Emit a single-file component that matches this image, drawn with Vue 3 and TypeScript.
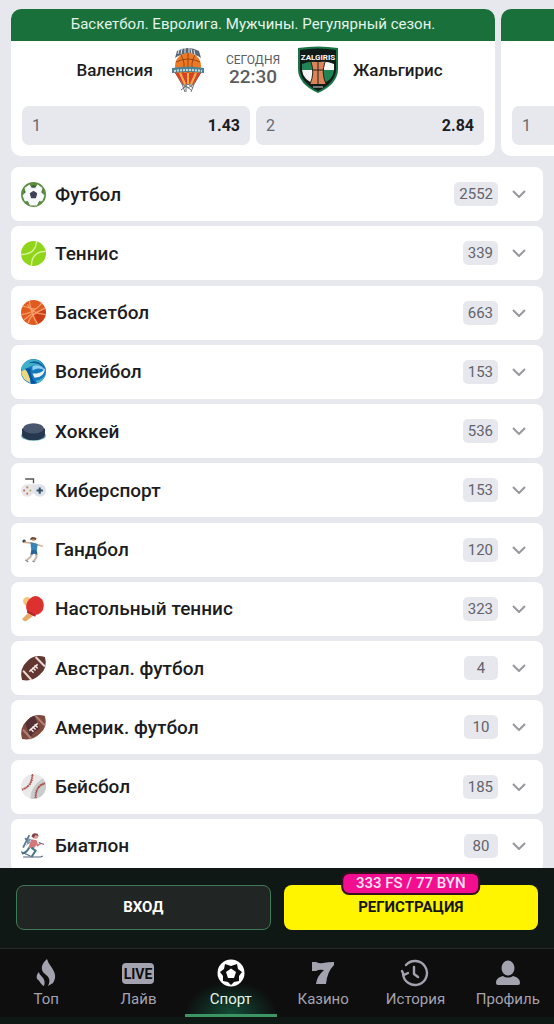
<script setup lang="ts">
interface Sport {
  id: string
  name: string
  count: number
}

const sports: Sport[] = [
  { id: 'football', name: 'Футбол', count: 2552 },
  { id: 'tennis', name: 'Теннис', count: 339 },
  { id: 'basketball', name: 'Баскетбол', count: 663 },
  { id: 'volleyball', name: 'Волейбол', count: 153 },
  { id: 'hockey', name: 'Хоккей', count: 536 },
  { id: 'esports', name: 'Киберспорт', count: 153 },
  { id: 'handball', name: 'Гандбол', count: 120 },
  { id: 'table-tennis', name: 'Настольный теннис', count: 323 },
  { id: 'aussie', name: 'Австрал. футбол', count: 4 },
  { id: 'american', name: 'Америк. футбол', count: 10 },
  { id: 'baseball', name: 'Бейсбол', count: 185 },
  { id: 'biathlon', name: 'Биатлон', count: 80 },
]

const tabs = [
  { id: 'top', label: 'Топ' },
  { id: 'live', label: 'Лайв' },
  { id: 'sport', label: 'Спорт' },
  { id: 'casino', label: 'Казино' },
  { id: 'history', label: 'История' },
  { id: 'profile', label: 'Профиль' },
]
const activeTab = 'sport'
</script>

<template>
  <div class="page">
    <section class="carousel">
      <article class="match">
        <h2 class="league">Баскетбол. Евролига. Мужчины. Регулярный сезон.</h2>
        <div class="teams">
          <div class="team home">
            <span>Валенсия</span>
            <svg class="crest" viewBox="0 0 44 48" aria-hidden="true">
              <path d="M9 12 11 5Q22-1 33 5l2 7Q22 3 9 12Z" fill="#596673" />
              <path d="m12 8 1-4m2 4 1-5m3 4V2m4 5V2m3 6-1-5m4 6-1-5" stroke="#dfe6eb" stroke-width="1" />
              <path d="M8 25 17 38h10l9-13Z" fill="#d8422b" />
              <path d="m13 26 6 12m3-12v12m9-12-6 12" stroke="#f6c34a" stroke-width="3" />
              <path d="m9 26 7 12h12l7-12" fill="none" stroke="#7b4436" stroke-width="1" />
              <circle cx="22" cy="20" r="13" fill="#ee7925" />
              <path d="M22 7v26M10 16q12-6 24 0M15 9q5 8 2 18M29 9q-5 8-2 18" fill="none" stroke="#934719" stroke-width="1" />
              <path d="M9 27h26l-8 11H17Z" fill="#d8422b" />
              <path d="m14 27 5 11m3-11v11m8-11-5 11" stroke="#f6b244" stroke-width="2" />
              <path d="M6 22q16-3 32 0v5q-16-2-32 0Z" fill="#4d8390" />
              <path d="M8 25q14-2 28 0" fill="none" stroke="#c9dce0" stroke-width="2" stroke-dasharray="2 1" />
              <path d="m16 38 3 8m-2-4 5-4 5 4m-11-4 6 4 6-4-3 8m-5-8v8m-5-2 5-4 5 4" fill="none" stroke="#6c7378" stroke-width="1" />
            </svg>
          </div>
          <div class="kickoff">
            <span class="day">СЕГОДНЯ</span>
            <time class="hour">22:30</time>
          </div>
          <div class="team">
            <svg class="crest" viewBox="0 0 44 48" aria-hidden="true">
              <path d="M2 2Q22-1 42 2v21q0 15-20 24Q2 38 2 23Z" fill="#197345" />
              <path d="M4 4Q22 1 40 4v19q0 13-18 22Q4 36 4 23Z" fill="#111b18" />
              <path d="M6 18q8-3 14-2v9H6Z" fill="#208454" />
              <path d="M24 16q7-1 14 2v6H24Z" fill="#f7f8f6" />
              <path d="M6 24h13v14Q7 34 6 24Z" fill="#f7f8f6" />
              <path d="M25 24h13q-1 11-13 14Z" fill="#208454" />
              <path d="M15 16h14q-4 11 1 22H14q5-11 1-22Z" fill="#db8457" />
              <path d="M22 16v22M17 24h10M15 16q4 11-1 22m15-22q-4 11 1 22" fill="none" stroke="#26211e" stroke-width="1" />
              <path d="M17 41h10" stroke="#d8d8d8" stroke-width="1" />
              <text x="22" y="14" class="crest-name">ZALGIRIS</text>
            </svg>
            <span>Жальгирис</span>
          </div>
        </div>
        <div class="odds">
          <button type="button" class="odd"><span>1</span><b>1.43</b></button>
          <button type="button" class="odd"><span>2</span><b>2.84</b></button>
        </div>
      </article>
      <article class="match">
        <div class="league"></div>
        <div class="teams"></div>
        <div class="odds">
          <button type="button" class="odd"><span>1</span></button>
        </div>
      </article>
    </section>

    <main class="sports">
      <button v-for="sport in sports" :key="sport.id" type="button" class="sport">
        <svg class="sport-icon" viewBox="0 0 24 24" aria-hidden="true">
          <g v-if="sport.id === 'football'">
            <circle cx="12" cy="12" r="12" fill="#5c8c3f" />
            <circle cx="12" cy="12" r="9" fill="#3f5e3c" />
            <path d="m8 3 2 3h4l2-3 4 3-1 4 3 3-2 5h-3l-2 4h-6l-2-4H4l-2-5 3-3-1-4Z" fill="#f7f8fb" stroke="#f7f8fb" stroke-linejoin="round" />
            <path d="m12 9 3 2-1 4h-4l-1-4Z" fill="#3d4058" stroke="#3d4058" stroke-linejoin="round" />
          </g>
          <g v-else-if="sport.id === 'tennis'">
            <circle cx="12" cy="12" r="12" fill="#91d51b" />
            <path d="M0 13Q14 13 15 0M10 24q0-14 14-14" fill="none" stroke="#d9f4a0" stroke-width="1.3" />
          </g>
          <g v-else-if="sport.id === 'basketball'">
            <circle cx="12" cy="12" r="12" fill="#e15a20" />
            <path d="M12 12 23 8a12 12 0 0 1-7 15Z" fill="#cd3f16" />
            <path d="M8 1q2 14 8 22M0 14Q12 13 20 3M6 4q4 9 18 10M2 6l12 3m-7 13q1-8 16-14M3 19l9-7" fill="none" stroke="#f6a06b" stroke-width="1.2" />
          </g>
          <g v-else-if="sport.id === 'volleyball'">
            <circle cx="12" cy="12" r="12" fill="#1678bd" />
            <path d="M3 4Q11-3 19 3l3 4Q11 3 2 12q-4-3 1-8Z" fill="#3fb0c8" />
            <path d="M7 4q7-4 13 1l2 3Q16 3 7 4Z" fill="#0f5f9f" />
            <path d="M11 7q8-3 12 4-6-4-12 0Z" fill="#8fd0ee" />
            <path d="M4 10q5 3 5 13-8-3-9-11Z" fill="#e9d983" />
            <path d="M4 9h5q0 10 6 14l-5 1Q8 15 4 9Z" fill="#0755a0" />
            <path d="M23 9q0 8-10 9l-2-4q9 0 12-5Z" fill="#e9f2f1" />
            <path d="M14 21q8-1 10-8-1 8-8 10Z" fill="#4eb7cd" />
          </g>
          <g v-else-if="sport.id === 'hockey'">
            <ellipse cx="12" cy="16" rx="12" ry="5" fill="#78b3bd" />
            <path d="M1 9v6c0 7 22 7 22 0V9Z" fill="#25384d" />
            <ellipse cx="12" cy="9" rx="10" ry="5" fill="#48566e" />
          </g>
          <g v-else-if="sport.id === 'esports'">
            <path d="M4 1h8v4" fill="none" stroke="#575457" stroke-width="1.3" />
            <path d="M7 6h10v9H7Z" fill="#e4e5e9" />
            <circle cx="6" cy="12" r="6" fill="#e8e6e6" />
            <circle cx="18" cy="12" r="6" fill="#dde3e8" />
            <path d="M18 9v6m-3-3h6" stroke="#31526a" stroke-width="2" />
            <circle cx="6" cy="9" r="1" fill="#b98a63" /><circle cx="3" cy="12" r="1" fill="#ba615b" />
            <circle cx="9" cy="12" r="1" fill="#a4b35a" /><circle cx="6" cy="15" r="1" fill="#d27467" />
          </g>
          <g v-else-if="sport.id === 'handball'">
            <circle cx="3" cy="4" r="1.6" fill="#394351" />
            <path d="m3 5 8 1 10 3" fill="none" stroke="#d9a783" stroke-width="1.5" />
            <path d="m11 16-2 3-4 4m9-7 1 3-3 5" fill="none" stroke="#c9b3a7" stroke-width="1.8" />
            <path d="m9 5 5 1 2 1-1 7-5-1Z" fill="#3785bb" />
            <path d="m10 12 5 1 1 4-3-1-4 1Z" fill="#28669a" />
            <circle cx="12" cy="2" r="2" fill="#dda37b" />
            <path d="m9 1 2-1 4 1-1 2-2-1-3 1Z" fill="#6a4a38" />
            <path d="m4 22 3 2m4-1 2 1" stroke="#7c8990" />
          </g>
          <g v-else-if="sport.id === 'table-tennis'">
            <circle cx="6" cy="5" r="4" fill="#f4c57d" />
            <path d="m1 22 7-7 5 3-8 6q-2 1-4-2Z" fill="#e6a966" />
            <path d="M6 15Q3 8 8 3q6-6 12 0c5 8-1 15-6 15Z" fill="#dd3130" />
            <path d="m6 15 8 4" stroke="#af252c" stroke-width="2" />
          </g>
          <g v-else-if="sport.id === 'aussie' || sport.id === 'american'">
            <path d="M1 23Q-2 12 6 5q7-7 17-4 3 11-5 17-7 7-17 5Z" :fill="sport.id === 'aussie' ? '#633731' : '#80493e'" />
            <path v-if="sport.id === 'american'" d="M4 8q4-6 9-7l5 12-5 3-4 5Z" fill="#543036" />
            <path d="m2 14 8 9M14 1l9 9" :stroke="sport.id === 'aussie' ? '#ecd8d2' : '#ad8379'" stroke-width="2" />
            <path d="m8 15 8-7m-7 5 3 3m-1-5 3 3m-1-5 3 3" stroke="#f5e8e2" stroke-width="1.4" />
          </g>
          <g v-else-if="sport.id === 'baseball'">
            <circle cx="12" cy="12" r="12" fill="#ebeaeb" />
            <path d="M21 4A12 12 0 0 1 9 23.6Q9 12 21 4Z" fill="#c9cccc" />
            <path d="M1 15Q11 12 11 0m3 23q0-12 9-14" fill="none" stroke="#a8403e" stroke-width="1" />
            <path d="M1 15Q11 12 11 0m3 23q0-12 9-14" fill="none" stroke="#a9605b" stroke-width="2.4" stroke-dasharray="0.8 1.4" />
          </g>
          <g v-else>
            <path d="M8 2 2 14m2-9 4 5" stroke="#5a7c9a" stroke-width="1.8" />
            <path d="m10 6-5 7 2-8Z" fill="#7f9db4" />
            <path d="m10 6 5 1 1 3-4 5-5-1Z" fill="#d37879" />
            <circle cx="14" cy="3" r="2.5" fill="#dfa18b" />
            <path d="M10 3q1-4 6-2l1 2-3-1-2 3Z" fill="#88434f" />
            <path d="m14 9 2 3 3-2" fill="none" stroke="#d37879" stroke-width="1.6" />
            <path d="m10 14 4 3-4 6m-2-9-3 4-4 2" fill="none" stroke="#477a85" stroke-width="2" />
            <path d="M2 23h17l2-1M17 9l5 2M0 18l9 4" fill="none" stroke="#506580" stroke-width="1" />
          </g>
        </svg>
        <span class="sport-name">{{ sport.name }}</span>
        <span class="count">{{ sport.count }}</span>
        <svg class="chevron" viewBox="0 0 14 8" aria-hidden="true"><path d="m1 1 6 6 6-6" /></svg>
      </button>
    </main>

    <footer class="dock">
      <div class="auth">
        <button type="button" class="login">ВХОД</button>
        <button type="button" class="register">
          РЕГИСТРАЦИЯ
          <span class="bonus">333 FS / 77 BYN</span>
        </button>
      </div>
      <nav class="tabs">
        <a v-for="tab in tabs" :key="tab.id" href="#" class="tab" :class="{ active: tab.id === activeTab }">
          <svg class="tab-icon" viewBox="0 0 32 28" aria-hidden="true">
            <path v-if="tab.id === 'top'" d="M17 0q1 4 5 9c4 6 4 10 1 15l-5 3c3-6 1-9-3-12-5-4-4-10 2-15ZM9 13c0 4 8 6 5 14-3-1-4-5-7-7-1-3 0-5 2-7Z" />
            <g v-else-if="tab.id === 'live'">
              <rect y="4" width="32" height="21" rx="4" />
              <text x="16" y="20" class="live-text">LIVE</text>
            </g>
            <g v-else-if="tab.id === 'sport'">
              <circle cx="16" cy="14" r="13.5" />
              <path class="cut" d="m10 5 6 2 6-2 1 5 4 3-3 4v5l-5 1-3 3-3-3-5-1v-5l-3-4 4-3Z" />
              <path d="m16 9.500 5 3.500-2 6h-6l-2-6Z" />
            </g>
            <path v-else-if="tab.id === 'casino'" d="M5 3h4q4 2 7 1 5-1 11-1v3q-7 7-8 19H9q1-8 8-14-5-1-8 1H5Z" />
            <g v-else-if="tab.id === 'history'" fill="none" stroke="currentColor" stroke-width="2.4" stroke-linecap="round" stroke-linejoin="round">
              <path d="M7 6a12 12 0 1 1-3 9M3 12l2 4 4-2M15 8v7l4 3" />
            </g>
            <g v-else>
              <ellipse cx="16" cy="9" rx="6.500" ry="7.500" />
              <path d="M4 24c0-4 3-6 7-7 3 2 7 2 10 0 4 1 7 3 7 7q0 2-2 2H6q-2 0-2-2Z" />
            </g>
          </svg>
          <span>{{ tab.label }}</span>
        </a>
      </nav>
    </footer>
  </div>
</template>

<style>
body {
  background: #e7e8ed;
}
</style>

<style scoped>
.page {
  box-sizing: border-box;
  display: flex;
  flex-direction: column;
  min-height: 100vh;
  overflow-x: clip;
  background: #e7e8ed;
  color: #1c1d21;
  font-family: Roboto, "Noto Sans", sans-serif;
}

button {
  margin: 0;
  border: 0;
  font: inherit;
  color: inherit;
  cursor: pointer;
}

.carousel {
  display: flex;
  gap: 6px;
  padding: 9px 11px 11px;
  overflow: hidden;
}

.match {
  flex: 0 0 calc(100% - 48px);
  border-radius: 10px;
  background: #fff;
  overflow: hidden;
}

.league {
  height: 32px;
  margin: 0;
  background: #19703b;
  color: #e3f3e7;
  font-size: 15px;
  font-weight: 400;
  line-height: 31px;
  text-align: center;
}

.teams {
  display: grid;
  grid-template-columns: 1fr auto 1fr;
  align-items: center;
  gap: 16px;
  height: 58px;
}

.team {
  display: flex;
  align-items: center;
  gap: 13px;
  font-size: 17px;
  font-weight: 500;
}

.home {
  justify-content: flex-end;
}

.crest {
  width: 44px;
  height: 48px;
}

.crest-name {
  fill: #fff;
  font-size: 8px;
  font-weight: 700;
  text-anchor: middle;
}

.kickoff {
  display: flex;
  flex-direction: column;
  align-items: center;
  color: #5c5d61;
}

.day {
  font-size: 12px;
  line-height: 14px;
}

.hour {
  font-size: 19px;
  font-weight: 500;
  line-height: 20px;
}

.odds {
  display: grid;
  grid-template-columns: 1fr 1fr;
  gap: 6px;
  padding: 7px 11px 11px;
}

.odd {
  display: flex;
  align-items: center;
  justify-content: space-between;
  height: 39px;
  padding: 0 10px;
  border-radius: 7px;
  background: #e7e8ed;
  color: #66676f;
  font-size: 16px;
}

.odd b {
  color: #1c1d21;
  font-weight: 700;
}

.sports {
  display: flex;
  flex: 1;
  flex-direction: column;
  justify-content: space-between;
  gap: 5px;
  padding: 0 11px;
}

.sport {
  display: flex;
  align-items: center;
  height: 54px;
  padding: 0 17px 0 10px;
  border-radius: 8px;
  background: #fff;
  text-align: left;
}

.sport-icon {
  width: 25px;
  height: 25px;
  overflow: visible;
}

.sport-name {
  flex: 1;
  margin-left: 9px;
  font-size: 19px;
  font-weight: 500;
}

.count {
  min-width: 24px;
  padding: 0 5px;
  border-radius: 5px;
  background: #e7e8ed;
  color: #62636c;
  font-size: 15px;
  line-height: 24px;
  text-align: center;
}

.chevron {
  width: 14px;
  height: 8px;
  margin-left: 14px;
  fill: none;
  stroke: #97989d;
  stroke-width: 2;
}

.dock {
  position: sticky;
  bottom: 0;
  margin-top: -5px;
  background: #101816;
}

.auth {
  display: grid;
  grid-template-columns: 1fr 1fr;
  gap: 13px;
  padding: 17px 16px 18px;
}

.login,
.register {
  height: 45px;
  padding: 0 0 2px;
  border-radius: 8px;
  font-size: 15px;
  font-weight: 700;
}

.login {
  border: 1px solid #3f7955;
  background: #212625;
  color: #fff;
}

.register {
  position: relative;
  background: #fff500;
  color: #15160f;
}

.bonus {
  position: absolute;
  top: -13px;
  left: 50%;
  padding: 0 13px;
  border: 2px solid #35101f;
  border-radius: 8px;
  background: #f20d91;
  color: #ffe3f4;
  font-size: 15px;
  font-weight: 500;
  line-height: 19px;
  white-space: nowrap;
  transform: translateX(-50%);
}

.tabs {
  display: grid;
  grid-template-columns: repeat(6, 1fr);
  border-top: 1px solid #272b2a;
  border-bottom: 7px solid #0e1815;
  background: #0e0e0f;
}

.tab {
  display: flex;
  flex-direction: column;
  align-items: center;
  gap: 3px;
  padding: 10px 0 5px;
  border-bottom: 3px solid transparent;
  color: #a3a3af;
  font-size: 15px;
  line-height: 19px;
  text-decoration: none;
}

.tab.active {
  border-bottom-color: #3c9563;
  background: radial-gradient(ellipse 50% 50% at 50% 100%, #124c37, transparent);
  color: #e3f5ea;
}

.tab-icon {
  width: 32px;
  height: 28px;
  fill: currentColor;
}

.active .tab-icon {
  color: #fff;
}

.cut {
  fill: #0e0e0f;
}

.live-text {
  fill: #0e0e0f;
  font-size: 14px;
  font-weight: 700;
  text-anchor: middle;
}
</style>
